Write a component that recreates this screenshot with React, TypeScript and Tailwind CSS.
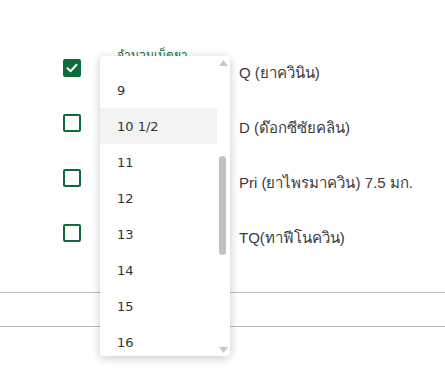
import React from 'react';

const drugs = [
  { label: 'Q (ยาควินิน)', checked: true },
  { label: 'D (ด๊อกซีซัยคลิน)', checked: false },
  { label: 'Pri (ยาไพรมาควิน) 7.5 มก.', checked: false },
  { label: 'TQ(ทาฟีโนควิน)', checked: false },
];

const amounts = ['9', '10 1/2', '11', '12', '13', '14', '15', '16'];

const Checkbox = ({ checked }: { checked: boolean }) =>
  checked ? (
    <div className="w-[18px] h-[18px] rounded-[2px] bg-[#0f6b3b] flex items-center justify-center">
      <svg width="14" height="14" viewBox="0 0 14 14" fill="none">
        <path d="M2.5 7.2 L5.6 10.2 L11.5 3.8" stroke="white" strokeWidth="2" strokeLinecap="round" strokeLinejoin="round" />
      </svg>
    </div>
  ) : (
    <div className="w-[18px] h-[18px] rounded-[2px] border-2 border-[#0f6b3b] bg-white" />
  );

const App = () => {
  return (
    <div className="relative w-[445px] h-[374px] bg-white overflow-hidden" style={{ fontFamily: '"Liberation Sans", "Noto Sans", sans-serif' }}>
      <div className="pt-[42px] pl-[117px] h-[59px]">
        <span className="text-[12px] leading-[14px] text-[#0f6b3b]">จำนวนเม็ดยา</span>
      </div>

      <div className="flex flex-col">
        {drugs.map(d => (
          <div key={d.label} className="flex h-[55px]">
            <div className="w-[239px] pl-[63px]">
              <Checkbox checked={d.checked} />
            </div>
            <div className="mt-[3px] text-[15px] leading-[21px] text-[#3a3a3a]">{d.label}</div>
          </div>
        ))}
      </div>

      <div className="mt-[13px] border-t border-[#bdbdbd]" />
      <div className="mt-[33px] border-t border-[#bdbdbd]" />

      {/* open dropdown */}
      <div className="absolute left-[100px] top-[56px] w-[130px] h-[300px] bg-white rounded-[4px] shadow-[0_2px_10px_rgba(0,0,0,0.22)] overflow-hidden flex">
        <div className="w-[117px] pt-[16px] flex flex-col" style={{ fontFamily: '"DejaVu Sans", sans-serif' }}>
          {amounts.map(a => (
            <div
              key={a}
              className={`h-[36px] shrink-0 flex items-center pl-[17px] pt-[2px] text-[13px] text-[#333] ${a === '10 1/2' ? 'bg-[#f3f3f3]' : ''}`}
            >
              {a}
            </div>
          ))}
        </div>
        <div className="w-[13px] flex flex-col items-center pt-[3px] pb-[3px]">
          <svg width="9" height="6" viewBox="0 0 9 6" className="mt-[1px]">
            <path d="M0 6 L4.5 0 L9 6 Z" fill="#c6c6c6" />
          </svg>
          <div className="mt-[90px] w-[7px] h-[99px] rounded-full bg-[#c1c1c1] -ml-[2px]" />
          <div className="flex-1" />
          <svg width="9" height="6" viewBox="0 0 9 6">
            <path d="M0 0 L9 0 L4.5 6 Z" fill="#c6c6c6" />
          </svg>
        </div>
      </div>
    </div>
  );
};

export default App;
